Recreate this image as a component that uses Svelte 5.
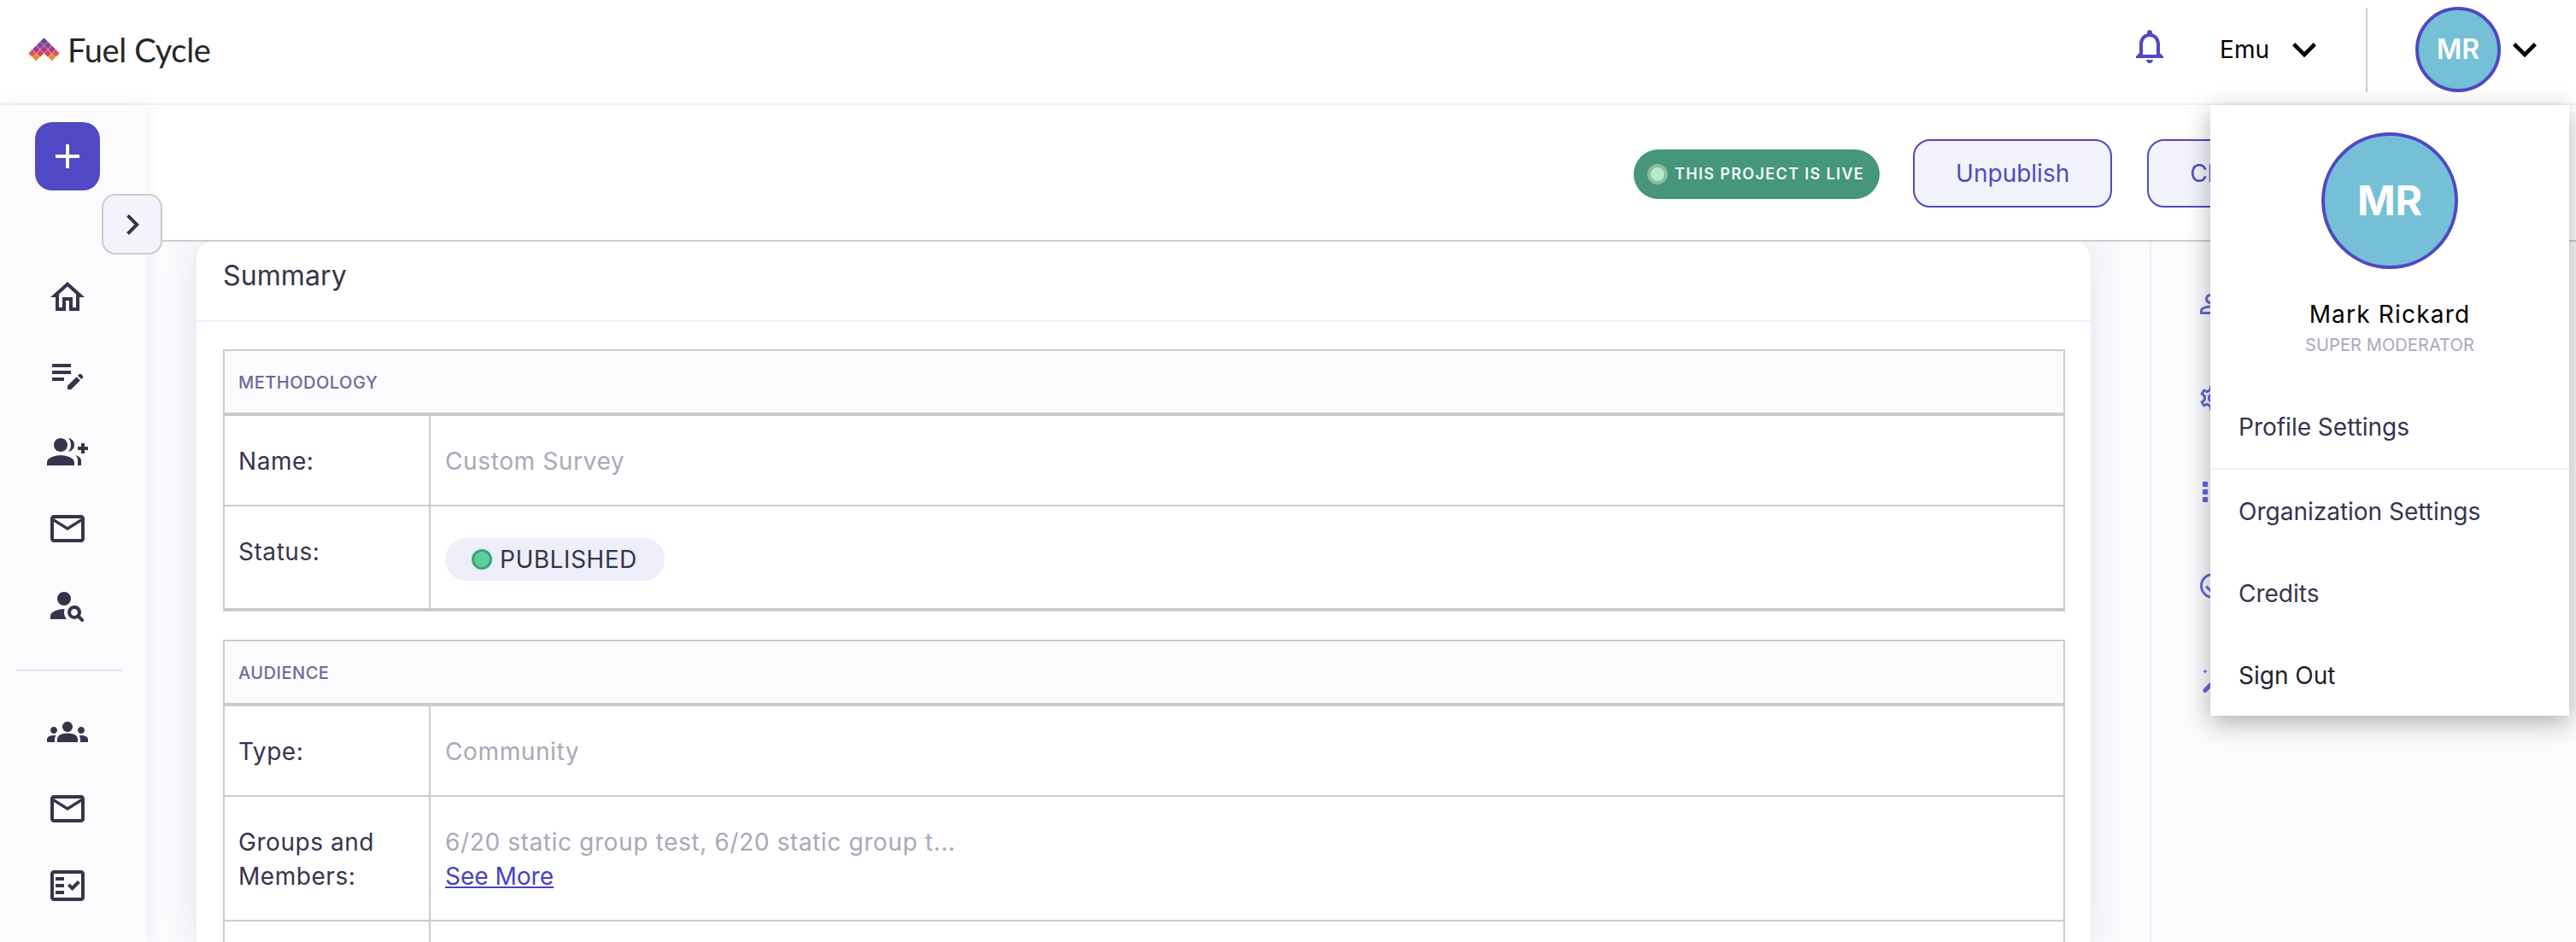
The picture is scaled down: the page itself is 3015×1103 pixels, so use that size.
<script>
  const tiles = [
    [51.5, 47.6, "#64499f"],
    [47, 52.2, "#8a3f98"], [56, 52.2, "#8d3f96"],
    [42.3, 56.8, "#a8358c"], [51.5, 56.8, "#b0348a"], [60.7, 56.8, "#a8358c"],
    [37.7, 61.4, "#d9554f"], [47, 61.4, "#d2484f"], [56, 61.4, "#d2484f"], [65.3, 61.4, "#d9554f"],
    [42.3, 66, "#ee8a40"], [60.7, 66, "#ee8a40"]
  ];

  const icons = {
    home: "M12 5.69l5 4.5V18h-2v-6H9v6H7v-7.81l5-4.5M12 3L2 12h3v8h6v-6h2v6h6v-8h3L12 3z",
    editNote: "M3 10h11v2H3v-2zm0-2h11V6H3v2zm0 8h7v-2H3v2zm15.01-3.13.71-.71c.39-.39 1.02-.39 1.41 0l.71.71c.39.39.39 1.02 0 1.41l-.71.71-2.12-2.12zm-.71.71-5.3 5.3V21h2.12l5.3-5.3-2.12-2.12z",
    groupAdd: "M22 9V7h-2v2h-2v2h2v2h2v-2h2V9h-2z M8 12c2.21 0 4-1.79 4-4s-1.79-4-4-4-4 1.79-4 4 1.79 4 4 4z M8 14c-2.67 0-8 1.34-8 4v2h16v-2c0-2.66-5.33-4-8-4z M12.51 4.05C13.43 5.11 14 6.49 14 8s-.57 2.89-1.49 3.95C14.47 11.7 16 10.04 16 8s-1.53-3.7-3.49-3.95z M16.53 13.83c.89.83 1.47 1.87 1.47 3.17v3h2v-3c0-1.45-1.59-2.51-3.47-3.17z",
    mail: "M20 4H4c-1.1 0-2 .9-2 2v12c0 1.1.9 2 2 2h16c1.1 0 2-.9 2-2V6c0-1.1-.9-2-2-2zm0 14H4V8l8 5 8-5v10zm-8-7L4 6h16l-8 5z",
    personSearch: "M10 4a4 4 0 1 0 0 8 4 4 0 0 0 0-8z M10.35 14.01C7.62 13.91 2 15.27 2 18v2h9.54c-2.47-2.76-1.23-5.89-1.19-5.99z M19.43 18.02c.47-.8.7-1.77.5-2.82-.31-1.64-1.69-2.95-3.35-3.16-2.63-.34-4.85 1.87-4.5 4.5.22 1.66 1.52 3.04 3.16 3.35 1.05.2 2.02-.03 2.82-.5l1.86 1.86c.39.39 1.02.39 1.41 0 .39-.39.39-1.02 0-1.41l-1.9-1.82zM16 18c-1.1 0-2-.9-2-2s.9-2 2-2 2 .9 2 2-.9 2-2 2z",
    groups: "M12 12.75c1.63 0 3.07.39 4.24.9 1.08.48 1.76 1.56 1.76 2.73V18H6v-1.61c0-1.18.68-2.26 1.76-2.73 1.17-.52 2.61-.91 4.24-.91zM4 13c1.1 0 2-.9 2-2s-.9-2-2-2-2 .9-2 2 .9 2 2 2zm1.13 1.1c-.37-.06-.74-.1-1.13-.1-.99 0-1.93.21-2.78.58C.48 14.9 0 15.62 0 16.43V18h4.5v-1.61c0-.83.23-1.61.63-2.29zM20 13c1.1 0 2-.9 2-2s-.9-2-2-2-2 .9-2 2 .9 2 2 2zm4 3.43c0-.81-.48-1.53-1.22-1.85-.85-.37-1.79-.58-2.78-.58-.39 0-.76.04-1.13.1.4.68.63 1.46.63 2.29V18H24v-1.57zM12 6c1.66 0 3 1.34 3 3s-1.34 3-3 3-3-1.34-3-3 1.34-3 3-3z",
    factCheck: "M20 3H4c-1.1 0-2 .9-2 2v14c0 1.1.9 2 2 2h16c1.1 0 2-.9 2-2V5c0-1.1-.9-2-2-2zm0 16H4V5h16v14z M19.41 10.42l-1.42-1.42-3.17 3.17-1.41-1.42-1.41 1.41L14.82 15z M5 7h5v2H5z M5 11h5v2H5z M5 15h5v2H5z",
    manage: "M4 18v-.65c0-.34.16-.66.41-.81C6.1 15.53 8.03 15 10 15c.03 0 .05 0 .08.01.1-.7.3-1.37.59-1.98-.22-.02-.44-.03-.67-.03-2.42 0-4.68.67-6.61 1.82-.88.52-1.39 1.5-1.39 2.53V20h9.26c-.42-.6-.75-1.28-.97-2H4z M10 4C7.79 4 6 5.79 6 8s1.79 4 4 4 4-1.79 4-4-1.79-4-4-4zm0 6c-1.1 0-2-.9-2-2s.9-2 2-2 2 .9 2 2-.9 2-2 2z",
    settings: "M19.43 12.98c.04-.32.07-.64.07-.98 0-.34-.03-.66-.07-.98l2.11-1.65c.19-.15.24-.42.12-.64l-2-3.46c-.09-.16-.26-.25-.44-.25-.06 0-.12.01-.17.03l-2.49 1c-.52-.4-1.08-.73-1.69-.98l-.38-2.65C14.46 2.18 14.25 2 14 2h-4c-.25 0-.46.18-.49.42l-.38 2.65c-.61.25-1.17.59-1.69.98l-2.49-1c-.06-.02-.12-.03-.18-.03-.17 0-.34.09-.43.25l-2 3.46c-.13.22-.07.49.12.64l2.11 1.65c-.04.32-.07.65-.07.98 0 .33.03.66.07.98l-2.11 1.65c-.19.15-.24.42-.12.64l2 3.46c.09.16.26.25.44.25.06 0 .12-.01.17-.03l2.49-1c.52.4 1.08.73 1.69.98l.38 2.65c.03.24.24.42.49.42h4c.25 0 .46-.18.49-.42l.38-2.65c.61-.25 1.17-.59 1.69-.98l2.49 1c.06.02.12.03.18.03.17 0 .34-.09.43-.25l2-3.46c.12-.22.07-.49-.12-.64l-2.11-1.65zm-1.98-1.71c.04.31.05.52.05.73 0 .21-.02.43-.05.73l-.14 1.13.89.7 1.08.84-.7 1.21-1.27-.51-1.04-.42-.9.68c-.43.32-.84.56-1.25.73l-1.06.43-.16 1.13-.2 1.35h-1.4l-.19-1.35-.16-1.13-1.06-.43c-.43-.18-.83-.41-1.23-.71l-.91-.7-1.06.43-1.27.51-.7-1.21 1.08-.84.89-.7-.14-1.13c-.03-.31-.05-.54-.05-.74s.02-.43.05-.73l.14-1.13-.89-.7-1.08-.84.7-1.21 1.27.51 1.04.42.9-.68c.43-.32.84-.56 1.25-.73l1.06-.43.16-1.13.2-1.35h1.39l.19 1.35.16 1.13 1.06.43c.43.18.83.41 1.23.71l.91.7 1.06-.43 1.27-.51.7 1.21-1.07.85-.89.7.14 1.13zM12 8c-2.21 0-4 1.79-4 4s1.79 4 4 4 4-1.79 4-4-1.79-4-4-4zm0 6c-1.1 0-2-.9-2-2s.9-2 2-2 2 .9 2 2-.9 2-2 2z",
    apps: "M4 8h4V4H4v4zm6 12h4v-4h-4v4zm-6 0h4v-4H4v4zm0-6h4v-4H4v4zm6 0h4v-4h-4v4zm6-10v4h4V4h-4zm-6 4h4V4h-4v4zm6 6h4v-4h-4v4zm0 6h4v-4h-4v4z",
    checkCircle: "M12 2C6.48 2 2 6.48 2 12s4.48 10 10 10 10-4.48 10-10S17.52 2 12 2zm0 18c-4.41 0-8-3.59-8-8s3.59-8 8-8 8 3.59 8 8-3.59 8-8 8zm4.59-12.42L10 14.17l-2.59-2.58L6 13l4 4 8-8z",
    wand: "M6 3.5l.5 1.5 1.5.5-1.5.5-.5 1.5-.5-1.5-1.5-.5 1.5-.5z M4.8 19a1.7 1.7 0 1 0 2.4 2.4l13-13-1.2-1.2-1.2-1.2z",
    bell: "M12 22c1.1 0 2-.9 2-2h-4c0 1.1.9 2 2 2zm6-6v-5c0-3.07-1.63-5.64-4.5-6.32V4c0-.83-.67-1.5-1.5-1.5s-1.5.67-1.5 1.5v.68C7.64 5.36 6 7.92 6 11v5l-2 2v1h16v-1l-2-2zm-2 1H8v-6c0-2.48 1.51-4.5 4-4.5s4 2.02 4 4.5v6z",
    plus: "M19 13h-6v6h-2v-6H5v-2h6V5h2v6h6v2z",
    chevronRight: "M10 6L8.59 7.41 13.17 12l-4.58 4.59L10 18l6-6z",
    chevronDown: "M16.59 8.59L12 13.17 7.41 8.59 6 10l6 6 6-6z"
  };

  const primaryNav = ["home", "editNote", "groupAdd", "mail", "personSearch"];
  const secondaryNav = ["groups", "mail", "factCheck"];
  const toolIcons = ["manage", "settings", "apps", "checkCircle", "wand"];
</script>

{#snippet icon(name, cls)}
  <svg class={cls} viewBox="0 0 24 24" fill="currentColor" aria-hidden="true"><path d={icons[name]} /></svg>
{/snippet}

<div class="page">
  <header class="topbar">
    <div class="logo">
      <svg class="logo-mark" viewBox="33 43 37 28" aria-hidden="true">
        {#each tiles as [x, y, fill]}
          <path d="M{x} {y - 4.4}l4.4 4.4-4.4 4.4-4.4-4.4z" {fill} />
        {/each}
      </svg>
      <span>Fuel Cycle</span>
    </div>
    <div class="topbar-right">
      {@render icon("bell", "bell")}
      <div class="org">
        <span>Emu</span>
        {@render icon("chevronDown", "chev")}
      </div>
      <div class="vline"></div>
      <div class="avatar small">MR</div>
      {@render icon("chevronDown", "chev")}
    </div>
  </header>

  <div class="body">
    <aside class="sidebar">
      <button class="add">{@render icon("plus", "ico48")}</button>
      <nav class="nav first">
        {#each primaryNav as name}
          <div class="nav-item">{@render icon(name, "ico48")}</div>
        {/each}
      </nav>
      <div class="nav-sep"></div>
      <nav class="nav second">
        {#each secondaryNav as name}
          <div class="nav-item">{@render icon(name, "ico48")}</div>
        {/each}
      </nav>
    </aside>
    <button class="collapse">{@render icon("chevronRight", "ico48")}</button>

    <main class="main">
      <div class="actions">
        <div class="live"><span class="live-dot"></span>THIS PROJECT IS LIVE</div>
        <button class="btn">Unpublish</button>
        <button class="btn">Close</button>
      </div>

      <div class="content">
        <section class="card">
          <h2 class="card-title">Summary</h2>
          <div class="card-body">
            <div class="table">
              <div class="table-head">METHODOLOGY</div>
              <div class="row">
                <div class="label">Name:</div>
                <div class="value">Custom Survey</div>
              </div>
              <div class="row">
                <div class="label">Status:</div>
                <div class="value">
                  <span class="status"><span class="status-dot"></span>PUBLISHED</span>
                </div>
              </div>
            </div>

            <div class="table">
              <div class="table-head">AUDIENCE</div>
              <div class="row">
                <div class="label">Type:</div>
                <div class="value">Community</div>
              </div>
              <div class="row">
                <div class="label">Groups and<br />Members:</div>
                <div class="value">
                  6/20 static group test, 6/20 static group t...<br />
                  <a href="#top">See More</a>
                </div>
              </div>
              <div class="row">
                <div class="label">&nbsp;</div>
                <div class="value"></div>
              </div>
            </div>
          </div>
        </section>

        <aside class="tools">
          {#each toolIcons as name}
            {@render icon(name, "tool")}
          {/each}
        </aside>
      </div>
    </main>

    <div class="menu">
      <div class="menu-head">
        <div class="avatar large">MR</div>
        <div class="menu-name">Mark Rickard</div>
        <div class="menu-role">SUPER MODERATOR</div>
      </div>
      <div class="menu-item sep">Profile Settings</div>
      <div class="menu-item">Organization Settings</div>
      <div class="menu-item">Credits</div>
      <div class="menu-item dark">Sign Out</div>
    </div>
  </div>
</div>

<style>
  :global(body) {
    margin: 0;
    background: #fff;
  }

  .page {
    width: 3015px;
    height: 1103px;
    overflow: hidden;
    display: flex;
    flex-direction: column;
    font-family: Inter, "Liberation Sans", sans-serif;
    color: #36344c;
    font-size: 28px;
    line-height: 40px;
  }

  /* top bar */
  .topbar {
    flex: none;
    height: 116px;
    padding-bottom: 5px;
    border-bottom: 2px solid #f0f0fa;
    background: #fff;
    display: flex;
    align-items: center;
    justify-content: space-between;
  }
  .logo {
    display: flex;
    align-items: center;
    gap: 9px;
    margin-left: 33px;
    font-family: Lato, sans-serif;
    font-size: 38px;
    color: #262626;
    letter-spacing: -0.35px;
  }
  .logo-mark {
    width: 37px;
    height: 28px;
  }
  .topbar-right {
    display: flex;
    align-items: center;
    margin-right: 32px;
    color: #000;
  }
  .bell {
    width: 48px;
    height: 48px;
    color: #5048c4;
    margin: 0 58px 8px 0;
  }
  .org {
    display: flex;
    align-items: center;
    margin-right: 44px;
  }
  .org span {
    margin-right: 13px;
  }
  .chev {
    width: 56px;
    height: 56px;
    color: #000;
    flex: none;
  }
  .vline {
    width: 2px;
    height: 99px;
    background: #ccc;
    margin-right: 56px;
  }
  .avatar {
    box-sizing: border-box;
    border-radius: 50%;
    border: 4px solid #5048c4;
    background: #75c0d6;
    color: #fff;
    font-weight: 600;
    display: flex;
    align-items: center;
    justify-content: center;
  }
  .avatar.small {
    width: 100px;
    height: 100px;
    font-size: 32px;
  }
  .avatar.large {
    width: 160px;
    height: 160px;
    font-size: 48px;
    font-weight: 700;
  }

  /* sidebar */
  .body {
    flex: 1;
    display: flex;
    position: relative;
    min-height: 0;
  }
  .sidebar {
    flex: none;
    width: 171px;
    box-sizing: border-box;
    padding: 20px 13px 0 0;
    background: #fbfbfe;
    display: flex;
    flex-direction: column;
    align-items: center;
    box-shadow: 0 0 20px rgba(40, 40, 70, 0.08);
    position: relative;
    z-index: 1;
  }
  .add {
    flex: none;
    width: 76px;
    height: 80px;
    padding: 0;
    border: none;
    border-radius: 20px;
    background: #5048c4;
    color: #fff;
    display: flex;
    align-items: center;
    justify-content: center;
  }
  .ico48 {
    width: 48px;
    height: 48px;
    flex: none;
  }
  .nav {
    display: flex;
    flex-direction: column;
    align-items: center;
    color: #36344c;
  }
  .nav.first {
    margin-top: 80px;
  }
  .nav-item {
    height: 90.3px;
    display: flex;
    align-items: center;
  }
  .nav-sep {
    flex: none;
    width: 124px;
    height: 2px;
    background: #e4e6ef;
    margin: 30px 0 0 4px;
  }
  .nav.second {
    margin-top: 25px;
  }
  .collapse {
    position: absolute;
    left: 119px;
    top: 104px;
    width: 71px;
    height: 71px;
    padding: 0;
    box-sizing: border-box;
    border: 2px solid #ccc;
    border-radius: 16px;
    background: #f3f3fc;
    color: #36344c;
    display: flex;
    align-items: center;
    justify-content: center;
    z-index: 2;
  }

  /* main area */
  .main {
    flex: 1;
    min-width: 0;
    display: flex;
    flex-direction: column;
  }
  .actions {
    flex: none;
    height: 156px;
    padding: 2px 0 0 1741px;
    border-bottom: 2px solid #ccc;
    display: flex;
    align-items: center;
    background: #fff;
    color: #5048c4;
  }
  .live {
    height: 58px;
    box-sizing: border-box;
    padding: 0 18px 0 16px;
    border-radius: 29px;
    background: #45967a;
    color: #f4faf7;
    font-size: 18px;
    font-weight: 600;
    letter-spacing: 1.35px;
    display: flex;
    align-items: center;
    margin: 2px 39px 0 0;
  }
  .live-dot {
    width: 24px;
    height: 24px;
    box-sizing: border-box;
    border-radius: 50%;
    border: 4px solid #8fb9a6;
    background: #b3ecc7;
    margin-right: 8px;
  }
  .btn {
    height: 80px;
    box-sizing: border-box;
    padding: 0 48px;
    border: 2px solid #5048c4;
    border-radius: 20px;
    background: #f3f3fd;
    color: #5048c4;
    font: inherit;
    margin-right: 41px;
  }

  .content {
    flex: 1;
    min-height: 0;
    display: flex;
    background: #fbfbfe;
  }
  .card {
    flex: none;
    width: 2221px;
    margin-left: 57px;
    box-sizing: border-box;
    border-left: 2px solid #f0f0fa;
    border-right: 2px solid #f0f0fa;
    border-radius: 20px 20px 0 0;
    background: #fff;
    box-shadow: 0 0 44px rgba(50, 50, 90, 0.12);
    clip-path: inset(0 -70px -70px -70px);
  }
  .card-title {
    margin: 0;
    height: 72px;
    padding: 20px 31px 0;
    border-bottom: 2px solid #f0f0fa;
    font-size: 32px;
    font-weight: 400;
    line-height: 40px;
    letter-spacing: 0.1px;
    color: #36344c;
  }
  .card-body {
    padding: 32px 30px 0 31px;
  }
  .table {
    border: 2px solid #ccc;
    margin-bottom: 33px;
  }
  .table-head {
    height: 72px;
    line-height: 74px;
    padding-left: 16px;
    border-bottom: 4px solid #ccc;
    background: #fbfbfe;
    color: #6b6a9c;
    font-size: 20px;
    font-weight: 500;
    letter-spacing: 0.5px;
  }
  .row {
    display: flex;
    border-bottom: 2px solid #ccc;
  }
  .label {
    flex: none;
    width: 207px;
    padding: 33px 16px 31px;
    border-right: 2px solid #ccc;
    letter-spacing: 0.55px;
  }
  .value {
    flex: 1;
    padding: 33px 17px 31px;
    color: #a8a9b8;
    letter-spacing: 0.62px;
  }
  .value a {
    color: #4a3fc7;
    letter-spacing: 0;
  }
  .status {
    box-sizing: border-box;
    height: 50px;
    width: 257px;
    margin: 4px 0 1px 0;
    padding-left: 31px;
    border-radius: 25px;
    background: #edeef8;
    color: #36344c;
    letter-spacing: 0.5px;
    display: flex;
    align-items: center;
  }
  .status-dot {
    box-sizing: border-box;
    width: 24px;
    height: 24px;
    border-radius: 50%;
    border: 3px solid #3fa080;
    background: #5ccfa0;
    margin-right: 9px;
  }

  .tools {
    flex: 1;
    margin-left: 67px;
    border-left: 2px solid #eeeef6;
    background: #fbfbfe;
    padding: 55px 0 0 54px;
    display: flex;
    flex-direction: column;
    align-items: flex-start;
    gap: 74px;
    color: #6268d8;
  }
  .tool {
    width: 36px;
    height: 36px;
    flex: none;
  }

  /* user menu */
  .menu {
    position: absolute;
    top: 0;
    left: 2587px;
    width: 420px;
    background: #fff;
    box-shadow: 0 8px 28px rgba(0, 0, 0, 0.3);
    z-index: 3;
  }
  .menu-head {
    display: flex;
    flex-direction: column;
    align-items: center;
    padding: 32px 0;
  }
  .menu-name {
    margin-top: 33px;
    color: #000;
    letter-spacing: 1.2px;
  }
  .menu-role {
    margin-top: 2px;
    font-size: 20px;
    line-height: 28px;
    color: #a9aab9;
    letter-spacing: 0.1px;
  }
  .menu-item {
    height: 40px;
    padding: 29px 33px 27px;
  }
  .menu-item.sep {
    padding-top: 30px;
    padding-bottom: 28px;
    border-bottom: 2px solid #f0f0fa;
  }
  .menu-item.dark {
    color: #22222c;
  }
</style>
